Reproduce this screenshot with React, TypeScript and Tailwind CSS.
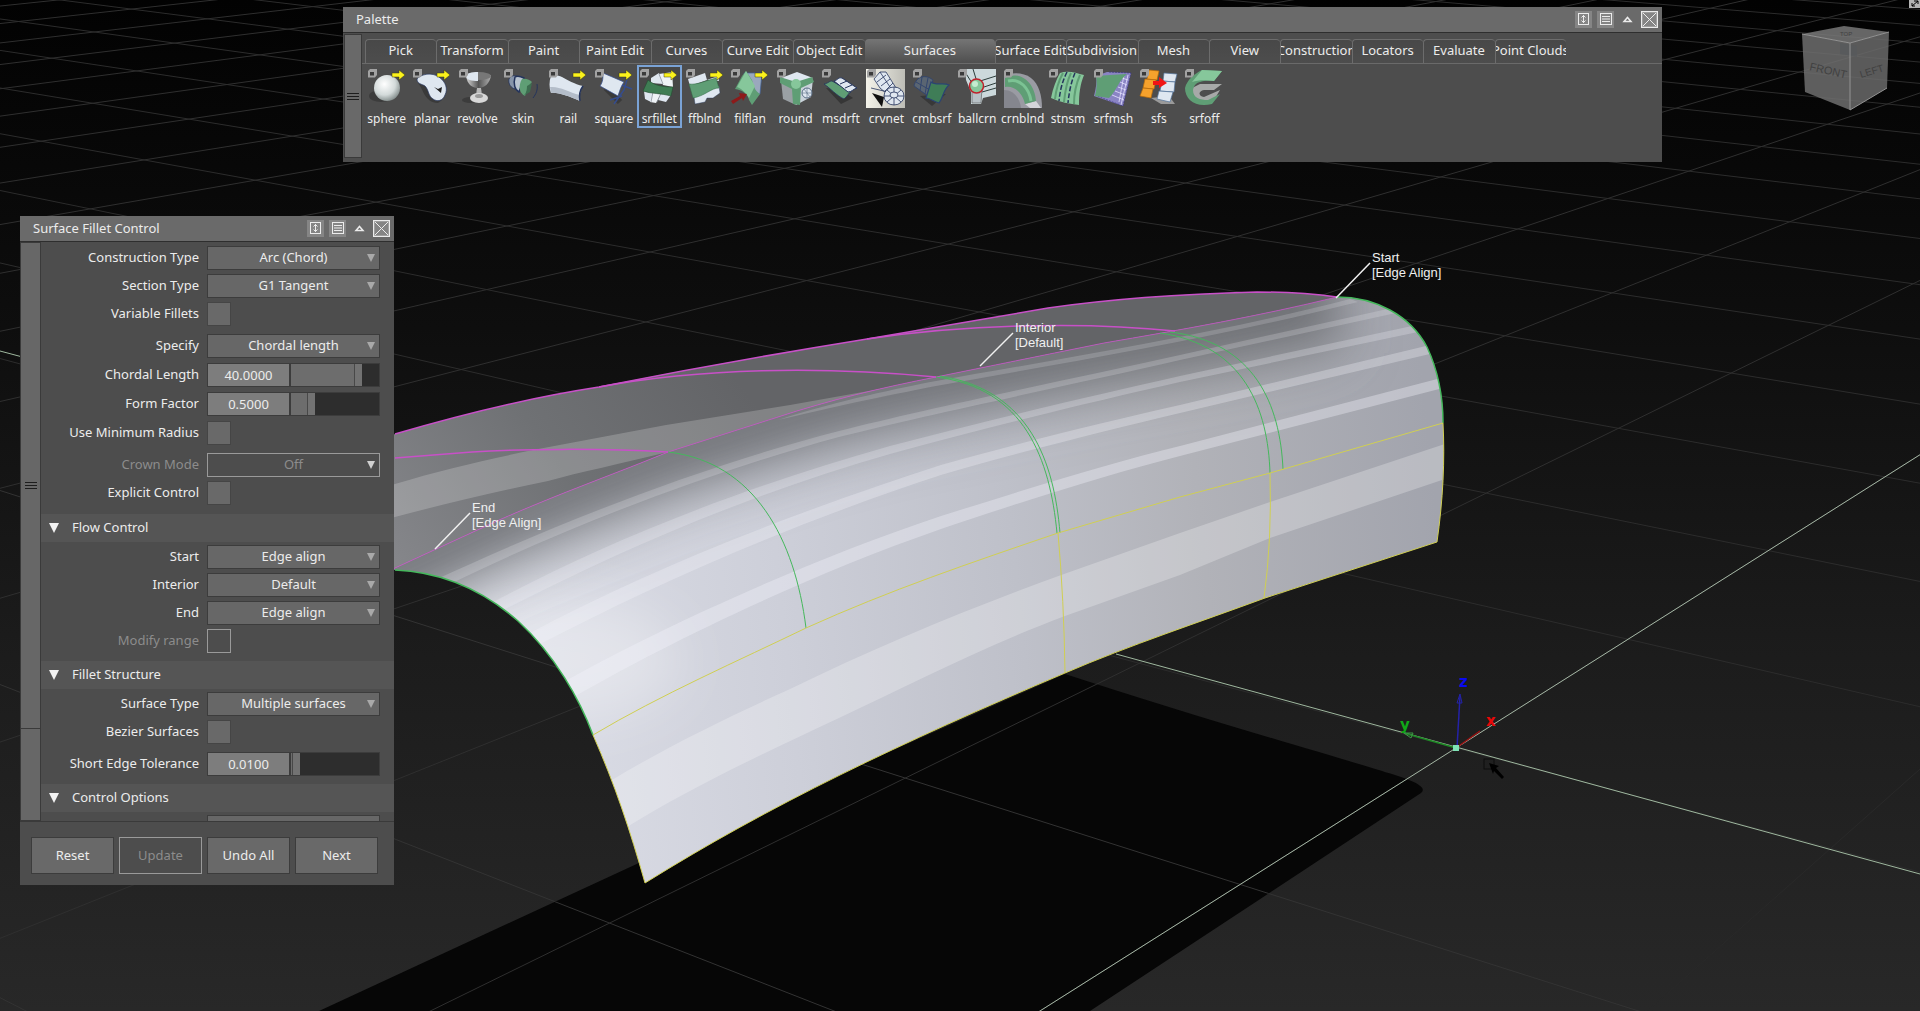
import { useState, type ReactNode } from "react";

/* ---------- viewport ---------- */

// Ground plane projection: one unit is one grid square, (0, 0) is the world origin
function project(u: number, v: number) {
  const w = 1 + 0.113 * u + 0.084 * v;
  return [(1456 + 356 * u - 221 * v) / w, (748 - 36.5 * u - 29 * v) / w];
}

function GridLine({ from, to, className }: { from: number[]; to: number[]; className: string }) {
  const [x1, y1] = project(from[0], from[1]);
  const [x2, y2] = project(to[0], to[1]);
  return <line x1={x1} y1={y1} x2={x2} y2={y2} className={className} />;
}

function Grid() {
  const us = Array.from({ length: 40 }, (_, i) => i - 4);
  const vs = Array.from({ length: 40 }, (_, i) => i - 4);
  return (
    <g>
      {us.map((u) => (
        <GridLine key={`u${u}`} from={[u, -5]} to={[u, 36]} className={u < 0 ? "stroke-[#333333]" : "stroke-[#2c2c2c]"} />
      ))}
      {vs.map((v) => (
        <GridLine key={`v${v}`} from={[-4, v]} to={[36, v]} className={v < 0 ? "stroke-[#292929]" : "stroke-[#2f2f2f]"} />
      ))}
    </g>
  );
}

const BODY =
  "M300 470 C340 452 365 445 395 434 C470 412 540 396 599 387 C690 369 780 353 867 339 L1048 308 C1110 299 1180 294 1257 292 C1290 292 1315 294 1337 297 C1375 297 1410 315 1427 347 C1440 375 1443 400 1443 423 C1445 460 1443 500 1437 542 L1265 598 C1200 622 1130 645 1065 673 C900 743 770 805 645 883 C630 830 615 785 593 735 C580 700 555 655 518 621 C485 592 445 572 395 570 L300 570 Z";

const RIDGE = "M300 612 C330 600 360 585 395 568 L497 521 C560 493 620 472 668 452 L778 417 C830 400 880 388 936 377 L1104 343 C1180 330 1260 316 1337 297";

const FILLET = `${RIDGE} L1480 290 L1480 620 L645 900 L300 900 Z`;

// Tapered reflection bands, each closed between its upper and lower edge
const STRIPES = [
  { d: "M778 420 C840 400 900 388 936 381 C1060 359 1220 333 1350 299 L1358 302 C1220 337 1060 364 936 386 C900 393 850 403 778 420 Z", o: 0.18 },
  { d: "M435 580 C560 522 700 467 839 431 C930 408 1080 377 1180 355 L1392 308 L1396 313 L1180 360 C1080 383 930 414 839 437 C700 475 560 530 446 586 Z", o: 0.2 },
  { d: "M490 604 C600 544 740 488 890 446 C1000 417 1100 394 1180 376 L1412 326 L1418 332 L1180 382 C1100 400 1000 424 890 454 C740 497 610 555 500 612 Z", o: 0.25 },
  { d: "M528 634 C640 574 780 517 941 465 C1030 440 1110 421 1180 405 L1430 345 L1434 353 L1180 413 C1110 430 1030 449 941 475 C780 528 650 587 540 644 Z", o: 0.3 },
  { d: "M560 684 C650 633 800 563 941 516 C1030 488 1110 463 1180 446 L1445 377 L1447 387 L1180 456 C1110 474 1030 499 941 529 C800 578 660 647 572 698 Z", o: 0.36 },
];

function Model() {
  return (
    <g>
      <path
        d="M319 1011 L641 862 L1065 674 C1180 712 1330 755 1395 775 Q1430 786 1421 793 L1090 1011 Z"
        className="fill-[#060606]"
      />
      <g clipPath="url(#shadow)">
        <Grid />
      </g>

      <path d={BODY} fill="url(#top)" />
      <g clipPath="url(#body)">
        <path
          d="M300 510 C340 500 365 492 395 484 C440 470 490 459 533 450 L666 425 L790 405 L936 379 L778 417 L668 452 C620 464 580 472 548 481 C490 493 440 505 395 517 L300 545 Z"
          className="fill-white/20"
        />
        <g clipPath="url(#fillet)">
          <path d={BODY} fill="url(#side)" />
          <ellipse cx="560" cy="660" rx="120" ry="60" filter="url(#blurWide)" className="fill-white/30" />
          <g filter="url(#blurWide)" fill="none">
            <path d={RIDGE} className="stroke-[#5b5d61]" strokeWidth="40" />
            <path d={RIDGE} className="stroke-[#66686c]/50" strokeWidth="110" />
          </g>
          {STRIPES.map((s) => (
            <path key={s.d} d={s.d} fill="#f4f5fb" fillOpacity={s.o} />
          ))}
          <path
            d="M612 780 C670 745 730 716 788 690 C880 645 970 608 1064 574 L1180 533 L1270 502 L1445 444 L1442 480 L1270 538 L1180 575 L1065 616 C980 648 910 685 839 718 C760 755 690 788 627 827 Z"
            className="fill-white/25"
          />
        </g>
      </g>

      {/* isoparms and boundaries */}
      <g fill="none" strokeWidth="1">
        <g className="stroke-[#c850c8]">
          <path d="M395 434 C470 412 540 396 599 387 C690 369 780 353 867 339 L1048 308 C1110 299 1180 294 1257 292 C1290 292 1315 294 1337 297" strokeWidth="1.5" />
          <path d={RIDGE} strokeOpacity="0.8" />
          <path d="M395 458 L472 452 C520 449 600 448 668 452" strokeWidth="1.5" />
          <path d="M599 387 C700 368 820 366 936 377" strokeWidth="1.5" />
          <path d="M867 339 C960 325 1080 321 1175 331" strokeWidth="1.5" />
        </g>
        <g className="stroke-[#45b85c]">
          <path d="M395 570 C445 572 485 592 518 621 C555 655 580 700 593 735" strokeWidth="1.5" />
          <path d="M1337 297 C1375 297 1410 315 1427 347 C1440 375 1443 400 1443 423" strokeWidth="1.5" />
          <path d="M668 452 C755 462 795 540 806 628" />
          <path d="M936 377 C1025 388 1050 460 1057 533" />
          <path d="M940 376 C1030 390 1054 462 1060 533" />
          <path d="M1160 333 C1245 345 1268 410 1270 473" />
          <path d="M1170 332 C1255 342 1280 405 1283 469" />
        </g>
        <g className="stroke-[#d0cf52]">
          <path d="M593 735 C660 695 740 660 806 628 C890 590 970 563 1058 533 L1180 497 L1270 473 L1443 423" />
          <path d="M1443 423 C1445 460 1443 500 1437 542 L1265 598 C1200 622 1130 645 1065 673 C900 743 770 805 645 883 C630 830 615 785 593 735" />
          <path d="M1058 533 Q1064 600 1065 673" />
          <path d="M1270 473 Q1272 540 1264 598" />
        </g>
      </g>
    </g>
  );
}

function Callout({ x, y, tipX, tipY, name, mode }: { x: number; y: number; tipX: number; tipY: number; name: string; mode: string }) {
  return (
    <g>
      <line x1={x - 2} y1={y + 1} x2={tipX} y2={tipY} className="stroke-[#f0f0f0]" strokeWidth="1.5" />
      <text x={x} y={y} className="fill-[#f0f0f0] font-['Liberation_Sans',sans-serif] text-[13px]">
        <tspan x={x} dy="0">{name}</tspan>
        <tspan x={x} dy="15">{mode}</tspan>
      </text>
    </g>
  );
}

function AxisMarker() {
  return (
    <g fill="none">
      <line x1="1456" y1="748" x2="1480" y2="731" className="stroke-[#9a1212]" strokeWidth="1.5" />
      <line x1="1456" y1="748" x2="1404" y2="733" className="stroke-[#1d8a24]" strokeWidth="1.5" />
      <line x1="1457" y1="748" x2="1460" y2="696" className="stroke-[#2422a8]" strokeWidth="1.5" />
      <path d="M1457 703 L1460 694 L1462 703 Z" className="stroke-[#2422a8]" />
      <path d="M1413 733 L1404 733 L1411 738 Z" className="stroke-[#3c9a45]" />
      <rect x="1453" y="745" width="6" height="6" className="fill-[#7fe3b5]" />
      <g className="font-['DejaVu_Sans',sans-serif] text-[15px] font-bold">
        <text x="1459" y="687" className="fill-[#0a0af0]">z</text>
        <text x="1400" y="730" className="fill-[#10a818]">y</text>
        <text x="1486" y="726" className="fill-[#e80808]">x</text>
      </g>
      <rect x="1484" y="759" width="10" height="10" className="stroke-black/60" />
      <path d="M1489 763 L1499 766 L1496 768 L1504 777 L1502 779 L1494 771 L1493 774 Z" className="fill-black" />
    </g>
  );
}

function ViewCube() {
  return (
    <g strokeWidth="1">
      <path d="M1802 34 L1850 43 L1850 110 L1805 92 Z" className="fill-[#6e6e6e]/85" />
      <path d="M1850 43 L1889 32 L1887 88 L1850 110 Z" className="fill-[#6a6a6a]/85" />
      <path d="M1802 34 L1844 26 L1889 32 L1850 43 Z" className="fill-[#787878]/85" />
      <path d="M1840 43 L1857 46 V57 L1840 54 Z" className="fill-[#55585c]/60" />
      <path d="M1802 34 L1850 43 L1889 32 M1850 43 V110 L1887 88" fill="none" className="stroke-[#939393]" />
      <g className="fill-[#414141] font-['Liberation_Sans',sans-serif]">
        <text x="1809" y="70" transform="rotate(13 1809 70)" className="text-[11px]">FRONT</text>
        <text x="1861" y="78" transform="rotate(-17 1861 78)" className="text-[10px]">LEFT</text>
        <text x="1840" y="36" className="text-[6px]">TOP</text>
      </g>
    </g>
  );
}

function Viewport() {
  return (
    <svg viewBox="0 0 1920 1011" preserveAspectRatio="xMidYMid slice" className="absolute inset-0 h-full w-full" aria-label="Perspective view">
      <defs>
        <linearGradient id="sky" x1="0" y1="0" x2="0" y2="1">
          <stop offset="0" stopColor="#020202" />
          <stop offset="0.3" stopColor="#0d0d0d" />
          <stop offset="0.65" stopColor="#1c1c1c" />
          <stop offset="1" stopColor="#282828" />
        </linearGradient>
        <linearGradient id="top" gradientUnits="userSpaceOnUse" x1="395" y1="560" x2="700" y2="330">
          <stop offset="0" stopColor="#85868a" />
          <stop offset="0.5" stopColor="#6f7174" />
          <stop offset="1" stopColor="#636467" />
        </linearGradient>
        <linearGradient id="side" gradientUnits="userSpaceOnUse" x1="500" y1="640" x2="1440" y2="540">
          <stop offset="0" stopColor="#dcdee7" />
          <stop offset="0.3" stopColor="#cdcfd9" />
          <stop offset="0.55" stopColor="#bec0c9" />
          <stop offset="0.75" stopColor="#b1b2b8" />
          <stop offset="1" stopColor="#a2a4ad" />
        </linearGradient>
        <filter id="blurWide" filterUnits="userSpaceOnUse" x="200" y="200" width="1400" height="800">
          <feGaussianBlur stdDeviation="26" />
        </filter>
        <clipPath id="body"><path d={BODY} /></clipPath>
        <clipPath id="fillet"><path d={FILLET} /></clipPath>
        <clipPath id="shadow">
          <path d="M319 1011 L641 862 L1065 674 C1180 712 1330 755 1395 775 Q1430 786 1421 793 L1090 1011 Z" />
        </clipPath>
      </defs>
      <rect width="1920" height="1011" fill="url(#sky)" />
      <Grid />
      <Model />
      <GridLine from={[-4, 0]} to={[36, 0]} className="stroke-[#a3b5a3]" />
      <line x1="1116" y1="654" x2="1920" y2="874" className="stroke-[#9fb89f]" />
      <line x1="0" y1="351" x2="30" y2="359" className="stroke-[#9fb89f]" />
      <AxisMarker />
      <Callout x={1372} y={262} tipX={1336} tipY={298} name="Start" mode="[Edge Align]" />
      <Callout x={1015} y={332} tipX={980} tipY={366} name="Interior" mode="[Default]" />
      <Callout x={472} y={512} tipX={435} tipY={549} name="End" mode="[Edge Align]" />
      <ViewCube />
      <rect x="1909" y="-1" width="11" height="9" className="fill-[#b5b5b5]" />
      <path d="M1912 6 L1918 1 M1914 1 H1918 V4 M1912 3 V6 H1915" fill="none" className="stroke-black" />
    </svg>
  );
}

/* ---------- window chrome ---------- */

function TitleBar({ title }: { title: string }) {
  return (
    <header className="flex h-[26px] items-center gap-[5px] border-b border-[#2e2e2e] bg-[#6a6a6a] pr-1 pl-[13px]">
      <h2 className="flex-1 text-[13px]">{title}</h2>
      <button aria-label="Resize">
        <svg width="17" height="17" viewBox="0 0 17 17" fill="none" stroke="#ececec">
          <rect width="17" height="17" fill="#858585" stroke="none" />
          <rect x="3.5" y="2.5" width="10" height="11" />
          <path d="M8.5 4 V12 M6.5 6.5 L8.5 4.5 L10.5 6.5 M6.5 9.5 L8.5 11.5 L10.5 9.5" />
        </svg>
      </button>
      <button aria-label="Menu">
        <svg width="17" height="17" viewBox="0 0 17 17" fill="none" stroke="#ececec">
          <rect width="17" height="17" fill="#858585" stroke="none" />
          <rect x="3.5" y="2.5" width="11" height="11" />
          <path d="M5 5.5 H13 M5 8 H13 M5 10.5 H13" />
        </svg>
      </button>
      <button aria-label="Collapse">
        <svg width="17" height="17" viewBox="0 0 17 17" fill="none" stroke="#ececec" strokeWidth="1.5">
          <path d="M5 10.5 L8.5 6.5 L12 10.5 Z" />
        </svg>
      </button>
      <button aria-label="Close">
        <svg width="17" height="17" viewBox="0 0 17 17" fill="#858585" stroke="#ececec">
          <rect x="0.5" y="0.5" width="16" height="16" strokeWidth="1.5" />
          <path d="M2 2 L15 15 M15 2 L2 15" />
        </svg>
      </button>
    </header>
  );
}

function Grip() {
  return (
    <div className="flex flex-col gap-[2px]">
      <span className="h-px w-3 bg-[#1d1d1d]" />
      <span className="h-px w-3 bg-[#1d1d1d]" />
      <span className="h-px w-3 bg-[#1d1d1d]" />
    </div>
  );
}

/* ---------- tool icons, 40 x 40 ---------- */

const W = "#dfe7f0";
const G = "#5f9e75";
const LG = "#86c79b";
const NAVY = "#24345c";

const ICONS: Record<string, ReactNode> = {
  sphere: (
    <>
      <ellipse cx="14" cy="28" rx="12" ry="6" fill="#3c3c3c" />
      <circle cx="20" cy="20" r="13" fill="url(#ball)" />
    </>
  ),
  planar: (
    <>
      <path d="M6 15 C12 22 12 34 26 35 L30 32 L16 12 Z" fill="#3a3a3a" />
      <path d="M5 11 C9 6 20 4 27 9 C34 14 36 21 33 27 C31 33 25 34 21 31 C16 28 17 22 13 18 C10 16 5 16 5 11 Z" fill={W} stroke={NAVY} strokeWidth="0.7" />
      <path d="M22 19 L26 21 L30 19 L29 25 Z" fill="#222" />
    </>
  ),
  revolve: (
    <>
      <ellipse cx="12" cy="32" rx="8" ry="3" fill="#3c3c3c" />
      <path d="M8 7 C9 18 16 20 20 20 C26 20 32 16 33 7 Z" fill="url(#metal)" />
      <ellipse cx="20.5" cy="8" rx="12.5" ry="4" fill="#777" />
      <path d="M8 8 C8 12 14 13 20 13 V4 C14 4 8 5 8 8 Z" fill={W} />
      <path d="M19 20 H23 L24 27 H18 Z" fill="#b9b9b9" />
      <ellipse cx="21" cy="30" rx="9" ry="5" fill="#d8d8d8" />
      <ellipse cx="21" cy="28" rx="4" ry="2" fill="#9a9a9a" />
    </>
  ),
  skin: (
    <>
      <path d="M6 11 C8 7 12 7 15 9 L12 21 C8 20 5 16 6 11 Z" fill="#8795aa" stroke={NAVY} strokeWidth="0.8" />
      <path d="M12 9 C15 7 19 9 21 10 L16 24 C12 22 10 16 12 9 Z" fill="#b9c4d0" stroke={NAVY} strokeWidth="1.5" />
      <path d="M19 11 C23 10 27 12 29 14 C25 18 25 22 22 28 C16 25 15 18 19 11 Z" fill={G} />
      <path d="M24 18 C24 24 22 27 20 28 L27 24 L29 15 Z" fill="#3d6e50" />
      <path d="M34 16 C35 22 33 26 30 30" stroke={NAVY} fill="none" />
    </>
  ),
  rail: (
    <>
      <path d="M3 8 C1 13 1 20 3 25 C10 24 20 28 32 33 C31 28 32 23 35 18 C26 16 20 12 14 9 C10 7 6 7 3 8 Z" fill={W} />
      <path d="M2 19 C12 18 20 24 32 27 L32 33 C20 28 10 24 3 25 Z" fill="#b4bdc9" />
      <path d="M35 18 C32 22 31 28 32 33" stroke={NAVY} strokeWidth="1.5" fill="none" />
    </>
  ),
  square: (
    <>
      <path d="M12 20 L26 34" stroke="#3a3a3a" strokeWidth="6" />
      <path d="M1 4 L12 10 M25 16 L38 21 M34 8 L30 22 L20 36 M16 32 L28 28" stroke="#344c8e" strokeWidth="1.5" fill="none" />
      <path d="M9 5 L30 14 C27 18 26 22 24 28 L6 18 C9 14 9 10 9 5 Z" fill={W} stroke="#344c8e" strokeWidth="0.7" />
    </>
  ),
  srfillet: (
    <>
      <path d="M12 10 L20 5 L24 16 L12 15 Z" fill={W} />
      <path d="M20 6 L33 4 L34 19 L24 17 Z" fill="#eef2f6" />
      <path d="M5 23 L14 24 L12 34 L6 31 Z" fill={W} />
      <path d="M14 24 L22 26 L17 35 L11 34 Z" fill="#eef2f6" />
      <path d="M22 25 L32 27 L27 34 L19 32 Z" fill={W} />
      <path d="M14 24 L12 34 M22 25 L18 34 M20 6 L24 16" stroke="#7f8894" strokeWidth="0.7" />
      <path d="M9 12 C16 18 25 19 34 19 L32 28 C22 25 12 26 4 23 Z" fill="#3f7d54" stroke="#234b31" strokeWidth="0.6" />
    </>
  ),
  ffblnd: (
    <>
      <path d="M3 11 L20 5 L22 12 L5 18 Z" fill={W} />
      <path d="M22 12 L33 8 L34 13 Z" fill={W} />
      <path d="M9 29 L34 18 L35 25 L28 30 L22 30 L20 34 L10 36 Z" fill={W} stroke={NAVY} strokeWidth="0.4" />
      <path d="M4 16 C12 17 20 13 31 10 L34 20 C26 20 20 28 8 30 Z" fill={G} stroke="#2f6643" strokeWidth="0.5" />
    </>
  ),
  filflan: (
    <>
      <path d="M14 5 H32 L30 26 L18 26 Z" fill="#9aa8bd" stroke="#3f5f96" strokeWidth="0.7" />
      <path d="M12 8 L16 3 L22 12 C24 18 24 22 30 26 L22 37 L19 32 C18 26 12 22 5 21 Z" fill={G} />
      <path d="M16 3 L25 18 L19 30 C16 24 10 20 7 19 Z" fill={LG} />
      <path d="M1 33 L10 28 L9 25 L17 26 L13 33 L12 30 L3 36 Z" fill="#8d1a1a" />
    </>
  ),
  round: (
    <>
      <path d="M5 12 L20 18 V37 L7 31 Z" fill="#9aa0a4" />
      <path d="M20 18 L37 11 L35 29 L20 37 Z" fill="#c9d2da" />
      <path d="M5 10 L21 4 L37 10 L21 18 Z" fill={W} />
      <path d="M4 9 L20 14 L36 9 L38 14 L25 20 L24 37 L17 36 L16 21 L4 15 Z" fill={G} />
      <circle cx="20" cy="16" r="5" fill={LG} />
      <circle cx="31" cy="25" r="5" fill={W} stroke="#5c6f86" />
      <path d="M26 25 H36 M31 20 V30 M28 21 L34 29" stroke="#5c6f86" strokeWidth="0.6" />
    </>
  ),
  msdrft: (
    <>
      <path d="M5 20 L20 36 L32 30 L20 22 Z" fill="#363636" />
      <path d="M3 16 C8 15 8 13 11 13 L30 24 C27 25 27 28 23 31 C16 28 9 20 3 16 Z" fill={G} stroke={NAVY} strokeWidth="0.8" />
      <path d="M13 13 C17 12 17 9 21 10 L36 20 C32 21 31 24 27 24 Z" fill={W} stroke={NAVY} />
      <path d="M19 16 L26 13 M24 20 L31 17" stroke={NAVY} />
    </>
  ),
  crvnet: (
    <>
      <rect y="1" width="39" height="39" fill="url(#paper)" />
      <path d="M6 25 L18 29 L16 39 Z" fill="#111" />
      <g fill={W} stroke={NAVY} strokeWidth="0.8">
        <path d="M8 11 L14 4 L20 4 L30 20 L20 25 L14 20 Z" />
        <path d="M11 14 L20 7 M15 18 L24 11 M19 23 L27 15 M14 4 L26 22 M5 20 L22 24" />
        <ellipse cx="28" cy="28" rx="10" ry="9" />
        <path d="M18 28 H38 M28 19 V37 M21 22 L35 34 M35 22 L21 34" />
        <ellipse cx="28" cy="27" rx="4" ry="3" />
      </g>
    </>
  ),
  cmbsrf: (
    <>
      <path d="M8 28 L20 38 L34 26 Z" fill="#383838" />
      <path d="M2 18 C4 8 14 6 21 12 L16 28 Z" fill="#5a6572" stroke="#33466e" />
      <path d="M4 14 L18 22 M10 9 L8 23 M16 10 L13 26" stroke="#33466e" />
      <path d="M19 14 C24 18 32 14 37 17 C31 22 32 28 27 35 C22 34 18 30 14 30 Z" fill="#3f7d57" stroke="#2b4373" strokeWidth="1.2" />
    </>
  ),
  ballcrn: (
    <>
      <path d="M8 1 H39 V27 L26 30 L24 36 H14 V24 L9 12 Z" fill="#ccd9dc" />
      <path d="M16 1 L20 14 L39 8 M24 20 L39 15 M8 4 L15 15 M25 24 L39 20" stroke="#2b3c3a" fill="none" />
      <path d="M15 20 H25 L24 35 H15 Z" fill="#b8c1c6" stroke="#555" strokeWidth="0.6" />
      <circle cx="19.5" cy="18" r="7" fill={LG} stroke="#c0202a" strokeWidth="1.5" />
      <circle cx="18" cy="16" r="3" fill="#c4ecd0" />
    </>
  ),
  crnblnd: (
    <>
      <path d="M1 9 C6 4 20 4 28 10 C36 16 39 28 39 40 H1 Z" fill="#9a9ba3" />
      <path d="M1 22 C10 22 17 30 18 40 H1 Z" fill="#85868e" />
      <path d="M33 33 L38 40 H27 L22 36 Z" fill="#d5d5da" />
      <path d="M2 10 C16 2 32 14 33 33 L22 36 C20 26 12 17 2 19 Z" fill={G} />
      <path d="M5 13 C17 10 26 20 28 33" stroke="#7cc394" strokeWidth="3" fill="none" />
    </>
  ),
  stnsm: (
    <>
      <path d="M12 5 C20 2 28 5 36 7 C32 17 31 26 31 37 C22 36 12 34 3 30 C5 20 8 12 12 5 Z" fill={LG} />
      <path d="M19 4 C14 14 12 23 11 33 M27 5 C23 14 21 25 20 35" stroke={NAVY} strokeWidth="1.5" strokeDasharray="5 2" fill="none" />
      <path d="M15 5 C10 14 8 22 7 31 M23 5 C18 15 17 24 16 34 M32 7 C28 16 26 26 26 36" stroke={G} strokeWidth="2" fill="none" />
    </>
  ),
  srfmsh: (
    <>
      <path d="M14 4 L38 5 L30 38 L1 28 C3 20 4 14 3 8 Z" fill="#8a84c4" />
      <path d="M16 4 L38 5 L30 38 L4 28" stroke="#3b3682" strokeWidth="0.7" fill="none" strokeDasharray="2 1" />
      <path d="M29 10 L35 12 M27 14 L34 17 M25 19 L33 22 M22 23 L32 27 M19 27 L31 32 M31 7 L26 34 M35 7 L28 37" stroke="#e6e3ff" strokeWidth="0.8" />
      <path d="M3 8 C12 7 22 7 34 6 C26 12 24 22 16 30 L2 28 C4 20 4 14 3 8 Z" fill={G} />
    </>
  ),
  sfs: (
    <>
      <path d="M12 30 L22 36 L36 36 L30 28 Z" fill="#9a9a9a" />
      <g fill="#f7a22c" stroke="#b86a08" strokeWidth="0.7">
        <path d="M10 2 L20 3 L18 12 L8 11 Z" />
        <path d="M6 11 L17 12 L15 21 L4 20 Z" />
        <path d="M4 20 L14 21 L12 30 L1 28 Z" />
      </g>
      <g fill={W} stroke="#51729b" strokeWidth="0.7">
        <path d="M25 5 L38 6 L36 14 L24 13 Z" />
        <path d="M23 13 L36 14 L35 24 L21 23 Z" />
        <path d="M20 23 L34 24 L31 34 L18 31 Z" />
      </g>
      <path d="M14 13 H20 V9 L28 15 L20 20 V17 H14 Z" fill="#f01515" />
    </>
  ),
  srfoff: (
    <>
      <path d="M8 20 L16 16 L38 16 L30 22 H20 C14 23 14 28 20 29 L36 22 L30 32 C16 36 8 30 8 20 Z" fill="#a7a9a8" />
      <path d="M18 2 L38 3 L30 13 C18 12 10 14 9 22 C9 30 16 32 24 32 L36 26 L28 36 C12 40 1 32 1 20 C3 12 10 6 18 2 Z" fill={G} />
      <path d="M18 2 L38 3 L30 13 C22 12 14 12 8 14 Z" fill={LG} />
    </>
  ),
};

const TOOLS = [
  { name: "sphere", arrow: true },
  { name: "planar", arrow: true },
  { name: "revolve" },
  { name: "skin" },
  { name: "rail", arrow: true },
  { name: "square", arrow: true },
  { name: "srfillet", arrow: true },
  { name: "ffblnd", arrow: true },
  { name: "filflan", arrow: true },
  { name: "round" },
  { name: "msdrft" },
  { name: "crvnet" },
  { name: "cmbsrf" },
  { name: "ballcrn" },
  { name: "crnblnd" },
  { name: "stnsm" },
  { name: "srfmsh" },
  { name: "sfs" },
  { name: "srfoff" },
];

const TABS = [
  "Pick", "Transform", "Paint", "Paint Edit", "Curves", "Curve Edit", "Object Edit", "Surfaces",
  "Surface Edit", "Subdivision", "Mesh", "View", "Construction", "Locators", "Evaluate", "Point Clouds",
];

function Palette() {
  const [tab, setTab] = useState("Surfaces");
  const [tool, setTool] = useState("srfillet");

  return (
    <section className="absolute top-[7px] left-[343px] w-[1319px] bg-[#4d4d4d]">
      <svg width="0" height="0" className="absolute">
        <defs>
          <radialGradient id="ball" cx="0.4" cy="0.35" r="0.7">
            <stop offset="0" stopColor="#ffffff" />
            <stop offset="0.6" stopColor="#d3dada" />
            <stop offset="1" stopColor="#7e8887" />
          </radialGradient>
          <linearGradient id="metal">
            <stop offset="0" stopColor="#d8d8d8" />
            <stop offset="0.5" stopColor="#555555" />
            <stop offset="1" stopColor="#b0b0b0" />
          </linearGradient>
          <linearGradient id="paper">
            <stop offset="0" stopColor="#f4f3ea" />
            <stop offset="1" stopColor="#bdbdb6" />
          </linearGradient>
        </defs>
      </svg>
      <TitleBar title="Palette" />
      <div className="flex h-[129px] pt-px pl-px">
        <div className="mb-1 flex w-[18px] items-center justify-center border border-[#3a3a3a] bg-[#696969]">
          <Grip />
        </div>
        <div className="flex-1 pt-[5px]">
          <div className="border-b border-[#6a6a6a] pl-[3px]">
            <div role="tablist" className="flex h-6 w-[1201px]">
              {TABS.map((name) => (
                <button
                  key={name}
                  role="tab"
                  aria-selected={name === tab}
                  onClick={() => setTab(name)}
                  className={
                    name === tab
                      ? "flex w-[130px] justify-center overflow-hidden rounded-t bg-linear-to-b from-[#757575] to-[#4f4f4f] text-[13px] leading-[22px] whitespace-nowrap"
                      : "flex min-w-0 flex-1 justify-center overflow-hidden rounded-t border-t border-l border-[#6c6c6c] bg-linear-to-b from-[#484848] to-[#4d4d4d] pr-px text-[13px] leading-5 whitespace-nowrap"
                  }
                >
                  {name}
                </button>
              ))}
            </div>
          </div>
          <div className="flex w-[865px] pt-px pl-[2px]">
            {TOOLS.map((t) => (
              <button
                key={t.name}
                onClick={() => setTool(t.name)}
                className={
                  t.name === tool
                    ? "flex h-[63px] min-w-0 flex-1 flex-col items-center border-2 border-[#7aa3d6] bg-[#474747] pt-px"
                    : "flex h-[63px] min-w-0 flex-1 flex-col items-center border-2 border-transparent pt-px"
                }
              >
                <svg width="40" height="40" viewBox="0 0 40 40" className="shrink-0">
                  {ICONS[t.name]}
                  <path d="M3 1 H10 V7 L8 9.5 H1 V3 Z" fill="#a2a2a2" />
                  <rect x="3" y="4" width="4" height="3.5" fill="#3b3b3b" />
                  {t.arrow && <path d="M25 5 H32 V2 L38 7 L32 12 V9 H25 Z" fill="#fbf21c" stroke="#3a3a10" strokeWidth="0.5" />}
                </svg>
                <span className="text-[12px] leading-[22px]">{t.name}</span>
              </button>
            ))}
          </div>
        </div>
      </div>
    </section>
  );
}

/* ---------- Surface Fillet Control ---------- */

function Row({ id, label, muted, children }: { id: string; label: string; muted?: boolean; children: ReactNode }) {
  return (
    <div className="flex h-6 items-center gap-2">
      <label htmlFor={id} className={muted ? "w-[158px] text-right text-[#8c8c8c]" : "w-[158px] text-right"}>
        {label}
      </label>
      {children}
    </div>
  );
}

function SelectRow({ id, label, value, disabled }: { id: string; label: string; value: string; disabled?: boolean }) {
  return (
    <Row id={id} label={label} muted={disabled}>
      <span className="relative">
        <select
          id={id}
          disabled={disabled}
          className="block h-6 w-[173px] appearance-none border border-[#3c3c3c] bg-[#676767] text-center [text-align-last:center] disabled:border-[#9a9a9a] disabled:bg-transparent disabled:text-[#8c8c8c] disabled:opacity-100"
        >
          <option>{value}</option>
        </select>
        <svg width="8" height="8" viewBox="0 0 8 8" className="pointer-events-none absolute top-2 right-[5px]">
          <path d="M0 0 H8 L4 8 Z" fill={disabled ? "#d0d0d0" : "#a9a9a9"} />
        </svg>
      </span>
    </Row>
  );
}

function CheckRow({ id, label, disabled }: { id: string; label: string; disabled?: boolean }) {
  return (
    <Row id={id} label={label} muted={disabled}>
      <input
        id={id}
        type="checkbox"
        disabled={disabled}
        className="h-6 w-6 appearance-none border border-[#454545] bg-[#696969] checked:bg-[#9a9a9a] disabled:border-[#9a9a9a] disabled:bg-transparent"
      />
    </Row>
  );
}

function SliderRow({ id, label, initial, max }: { id: string; label: string; initial: number; max: number }) {
  const [value, setValue] = useState(initial);
  const fill = (value / max) * 100;
  return (
    <Row id={id} label={label}>
      <span className="flex w-[173px]">
        <input
          id={id}
          value={value.toFixed(4)}
          onChange={(e) => setValue(Number(e.target.value) || 0)}
          className="h-6 w-[83px] border border-[#3c3c3c] bg-[#7d7d7d] text-center"
        />
        <input
          type="range"
          aria-label={label}
          min={0}
          max={max}
          step="any"
          value={value}
          onChange={(e) => setValue(Number(e.target.value))}
          style={{ backgroundImage: `linear-gradient(to right, #6d6d6d ${fill}%, #2d2d2d ${fill}%)` }}
          className="h-6 w-[90px] appearance-none border border-[#3c3c3c] [&::-webkit-slider-thumb]:h-[22px] [&::-webkit-slider-thumb]:w-2 [&::-webkit-slider-thumb]:appearance-none [&::-webkit-slider-thumb]:border-l [&::-webkit-slider-thumb]:border-[#484848] [&::-webkit-slider-thumb]:bg-[#727272]"
        />
      </span>
    </Row>
  );
}

function Section({ title, children }: { title: string; children: ReactNode }) {
  return (
    <div>
      <button aria-expanded="true" className="mb-[3px] flex h-7 w-full items-center gap-[13px] bg-[#555555] pl-2">
        <svg width="10" height="10" viewBox="0 0 10 10">
          <path d="M0 0 H10 L5 10 Z" fill="#f2f2f2" />
        </svg>
        {title}
      </button>
      <div className="flex flex-col gap-1">{children}</div>
    </div>
  );
}

function FilletControl() {
  return (
    <section className="absolute top-[216px] left-[20px] w-[374px] bg-[#4d4d4d] text-[13px]">
      <TitleBar title="Surface Fillet Control" />
      <div className="flex h-[580px] border-b border-[#3a3a3a]">
        <div className="flex w-[21px] flex-col border border-[#3a3a3a] bg-[#676767]">
          <div className="flex h-[486px] items-center justify-center border-b border-[#3a3a3a]">
            <Grip />
          </div>
        </div>
        <div className="flex-1 overflow-hidden pt-1">
          <div className="flex flex-col gap-1">
            <SelectRow id="construction" label="Construction Type" value="Arc (Chord)" />
            <SelectRow id="section" label="Section Type" value="G1 Tangent" />
            <CheckRow id="variable" label="Variable Fillets" />
          </div>
          <div className="flex flex-col gap-[5px] pt-2">
            <SelectRow id="specify" label="Specify" value="Chordal length" />
            <SliderRow id="chordal" label="Chordal Length" initial={40} max={51} />
            <SliderRow id="form" label="Form Factor" initial={0.5} max={2.5} />
            <CheckRow id="minimum" label="Use Minimum Radius" />
          </div>
          <div className="flex flex-col gap-1 pt-2 pb-[9px]">
            <SelectRow id="crown" label="Crown Mode" value="Off" disabled />
            <CheckRow id="explicit" label="Explicit Control" />
          </div>
          <div className="flex flex-col gap-2">
            <Section title="Flow Control">
              <SelectRow id="start" label="Start" value="Edge align" />
              <SelectRow id="interior" label="Interior" value="Default" />
              <SelectRow id="end" label="End" value="Edge align" />
              <CheckRow id="modify" label="Modify range" disabled />
            </Section>
            <Section title="Fillet Structure">
              <SelectRow id="surface" label="Surface Type" value="Multiple surfaces" />
              <CheckRow id="bezier" label="Bezier Surfaces" />
              <div className="pt-1">
                <SliderRow id="tolerance" label="Short Edge Tolerance" initial={0.01} max={1} />
              </div>
            </Section>
            <Section title="Control Options">
              <SelectRow id="edge" label="Edge Type" value="" />
            </Section>
          </div>
        </div>
      </div>
      <footer className="grid grid-cols-4 gap-[5px] pt-[15px] pr-4 pb-[11px] pl-[11px]">
        <button className="h-[37px] border border-[#3c3c3c] bg-[#696969]">Reset</button>
        <button disabled className="h-[37px] border border-[#9a9a9a] text-[#8c8c8c]">Update</button>
        <button className="h-[37px] border border-[#3c3c3c] bg-[#696969]">Undo All</button>
        <button className="h-[37px] border border-[#3c3c3c] bg-[#696969]">Next</button>
      </footer>
    </section>
  );
}

export default function App() {
  return (
    <main className="relative h-screen overflow-hidden bg-black font-['Noto_Sans',sans-serif] text-[#ececec]">
      <Viewport />
      <Palette />
      <FilletControl />
    </main>
  );
}
